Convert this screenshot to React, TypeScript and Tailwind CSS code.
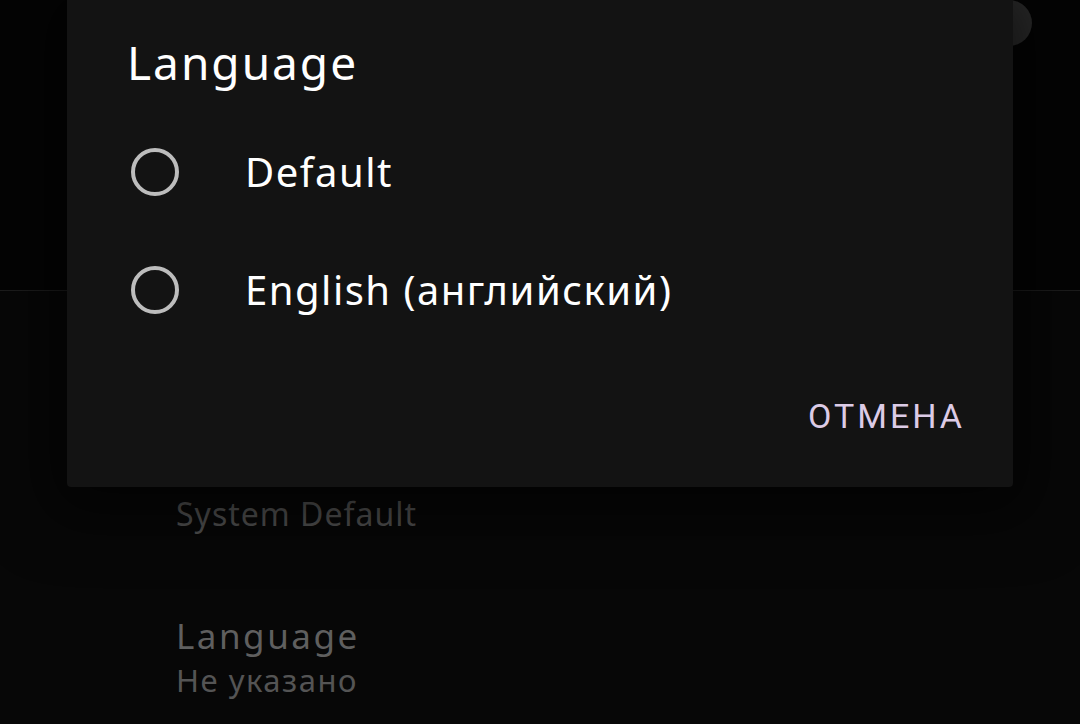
export default function App() {
  const options = ["Default", "English (английский)"];

  return (
    <div className="relative h-[724px] w-[1080px] overflow-hidden bg-[#070707] font-['Noto_Sans',Roboto,sans-serif]">
      {/* page behind the dialog */}
      <header className="flex h-[291px] justify-end border-b border-[#1c1c1c] bg-[#040404] pr-[48px]">
        <div className="h-[46px] w-[46px] rounded-full bg-[#2b2b2b]" />
      </header>

      <div className="pl-[176px] pt-[203px]">
        <p className="text-[32px] leading-[40px] tracking-[1px] text-[#4f4f4f]">System Default</p>
        <div className="mt-[81px]">
          <p className="text-[35px] leading-[42px] tracking-[2.5px] text-[#5f5f5f]">Language</p>
          <p className="mt-[4px] text-[31px] leading-[38px] tracking-[1.5px] text-[#545454]">Не указано</p>
        </div>
      </div>

      {/* language dialog */}
      <div className="absolute left-[67px] top-0 w-[946px] rounded-b-[4px] bg-[#131313] shadow-[0_10px_60px_20px_rgba(0,0,0,0.55)]">
        <h2 className="pl-[60px] pt-[34px] text-[46px] leading-[56px] tracking-[2px] text-white">Language</h2>

        <div className="mt-[23px]">
          {options.map((label) => (
            <div key={label} className="flex h-[118px] items-center pl-[64px]">
              <span className="h-12 w-12 rounded-full border-4 border-[#bdbdbd]" />
              <span className="ml-[66px] text-[40px] leading-[48px] tracking-[1.5px] text-white">
                {label}
              </span>
            </div>
          ))}
        </div>

        <div className="flex justify-end pb-[51px] pr-[48px] pt-[47px]">
          <button
            type="button"
            className="font-['Roboto',sans-serif] text-[34px] font-normal leading-[40px] tracking-[3px] text-[#dccbe6]"
          >
            ОТМЕНА
          </button>
        </div>
      </div>
    </div>
  );
}
